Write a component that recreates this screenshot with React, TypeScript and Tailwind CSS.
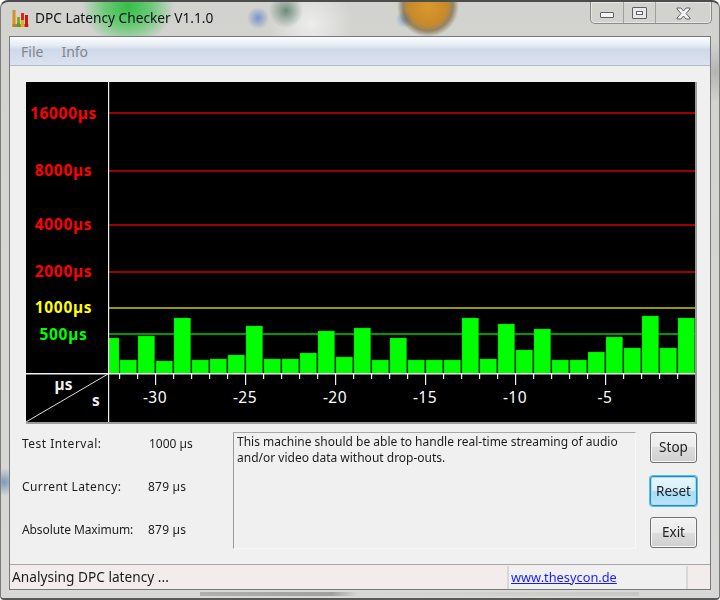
import React from "react";

const tops = [338, 360, 336, 361, 318, 360, 359, 355, 326, 359, 359, 353, 331, 357, 328, 360, 338, 360, 360, 360, 318, 359, 324, 350, 329, 360, 360, 352, 337, 348, 316, 348, 318];
const scale = [
  { t: "16000µs", y: 118.5, c: "#ff0000" },
  { t: "8000µs", y: 176, c: "#ff0000" },
  { t: "4000µs", y: 230, c: "#ff0000" },
  { t: "2000µs", y: 277, c: "#ff0000" },
  { t: "1000µs", y: 313, c: "#ffff00" },
  { t: "500µs", y: 340, c: "#00ff00" },
];
const lines = [
  { y: 113, c: "#e00000" },
  { y: 171, c: "#e00000" },
  { y: 225, c: "#e00000" },
  { y: 272, c: "#e00000" },
  { y: 308, c: "#d8d800" },
  { y: 334, c: "#00d800" },
];
const seconds = [
  { x: 155, t: "-30" },
  { x: 245, t: "-25" },
  { x: 335, t: "-20" },
  { x: 425, t: "-15" },
  { x: 515, t: "-10" },
  { x: 605, t: "-5" },
];

function Chart() {
  const ticks = Array.from({ length: 32 }, (_, i) => 119 + i * 18);
  return (
    <svg width={669} height={340} viewBox="26 82 669 340" className="block" fontFamily="'Noto Sans', sans-serif">
      <rect x={26} y={82} width={669} height={340} fill="#000" />
      {lines.map((l) => (
        <rect key={l.y} x={109} y={l.y - 0.7} width={586} height={1.4} fill={l.c} />
      ))}
      {tops.map((top, i) => {
        const x = i === 0 ? 109 : 120 + (i - 1) * 18;
        const w = i === 0 ? 10 : 16.6;
        return <rect key={i} x={x} y={top} width={w} height={373.5 - top} fill="#00ff00" stroke="#00b000" strokeWidth={0.4} />;
      })}
      <rect x={26} y={373} width={669} height={1.5} fill="#f0f0f0" />
      <rect x={108} y={82} width={1.2} height={340} fill="#f0f0f0" />
      {ticks.map((x) => (
        <rect key={x} x={x} y={374} width={1.2} height={(x - 155) % 90 === 0 ? 11 : 5} fill="#f0f0f0" />
      ))}
      <line x1={26} y1={422} x2={108} y2={374} stroke="#e0e0e0" strokeWidth={1} />
      {scale.map((s) => (
        <text key={s.t} x={63.5} y={s.y} textAnchor="middle" fill={s.c} fontSize={15.5} fontWeight={700} letterSpacing={0.7}>
          {s.t}
        </text>
      ))}
      <text x={63.5} y={390} textAnchor="middle" fill="#eeeeee" fontSize={15.5} fontWeight={700}>µs</text>
      <text x={96} y={406} textAnchor="middle" fill="#eeeeee" fontSize={15.5} fontWeight={700}>s</text>
      {seconds.map((s) => (
        <text key={s.t} x={s.x} y={403} textAnchor="middle" fill="#ffffff" fontSize={15.5} letterSpacing={0.5}>
          {s.t}
        </text>
      ))}
    </svg>
  );
}

function AppIcon() {
  return (
    <svg width={18} height={18} viewBox="0 0 18 18" className="block">
      <rect x={0.5} y={0} width={3} height={17} fill="#d89020" />
      <rect x={0.5} y={14} width={16} height={3} fill="#c08020" />
      <rect x={5} y={7} width={3} height={10} fill="#80a820" />
      <rect x={5} y={13} width={3} height={4} fill="#50a030" />
      <rect x={9} y={3} width={3} height={14} fill="#d82818" />
      <rect x={9} y={10} width={3} height={7} fill="#d8b020" />
      <rect x={13} y={5} width={3} height={12} fill="#c81818" />
    </svg>
  );
}

function CaptionButtons() {
  return (
    <div className="flex h-[22px] w-[122px] self-start rounded-b-[5px] border border-t-0 border-[#8a8a8a] shadow-[inset_0_0_0_1px_rgba(255,255,255,0.45)]">
      <div className="flex w-[33px] items-end justify-center border-r border-[#a0a0a0] pb-[5px]">
        <div className="h-[6px] w-[14px] rounded-[1px] border border-[#5c6068] bg-[#f4f4f4]" />
      </div>
      <div className="flex w-[32px] items-start justify-center border-r border-[#a0a0a0] pt-[5px]">
        <div className="flex h-[12px] w-[15px] items-center justify-center rounded-[1px] border border-[#5c6068] bg-[#e8e8e8]">
          <div className="h-[4px] w-[7px] border border-[#5c6068] bg-white" />
        </div>
      </div>
      <div className="flex flex-1 items-start justify-center pt-[5px]">
        <svg width={15} height={13} viewBox="0 0 15 13">
          <path d="M1 1h4l2.5 3L10 1h4v1L10 6.500 14 11v1h-4L7.500 9 5 12H1v-1l4-4.500L1 2z" fill="#f4f4f4" stroke="#60646c" strokeWidth={1} strokeLinejoin="round" />
        </svg>
      </div>
    </div>
  );
}

function Stat({ label, value, labelClass, valueClass }: { label: string; value: string; labelClass: string; valueClass: string }) {
  return (
    <div className="flex h-[18px] items-center">
      <span className={"w-[126px] shrink-0 whitespace-nowrap " + labelClass}>{label}</span>
      <span className={"whitespace-nowrap " + valueClass}>{value}</span>
    </div>
  );
}

function Btn({ children, active, h }: { children: React.ReactNode; active?: boolean; h: string }) {
  return (
    <button
      className={
        active
          ? h + " flex w-[47px] items-center justify-center rounded-[3px] border border-[#3c7fb1] bg-[linear-gradient(#e6f6fd_0%,#d4f0fc_50%,#a9dbf6_50%,#b8e4f9_100%)] text-[13.5px] text-[#222] shadow-[0_0_0_1px_#4fc3f0,inset_0_0_0_1px_#9ee0fa]"
          : h + " flex w-[47px] items-center justify-center rounded-[3px] border border-[#707070] bg-[linear-gradient(#f2f2f2_0%,#ebebeb_50%,#dddddd_50%,#cfcfcf_100%)] text-[13.5px] text-[#222] shadow-[inset_0_0_0_1px_#f8f8f8]"
      }
    >
      {children}
    </button>
  );
}

export default function App() {
  return (
    <div
      className="flex h-[600px] w-[720px] flex-col overflow-hidden rounded-t-[8px] rounded-b-[4px] border-x border-b-2 border-t-2 border-x-[#7c7c7c] border-b-[#5a5a5a] border-t-[#4c4c4c] bg-[radial-gradient(ellipse_46px_40px_at_127px_4px,rgba(50,190,70,1)_0,rgba(80,200,95,0.8)_50%,rgba(150,215,150,0)_100%),radial-gradient(circle_at_427px_4px,#d89a30_0,#c88a28_19px,rgba(120,100,60,0.7)_25px,rgba(180,180,170,0)_31px),radial-gradient(circle_at_404px_17px,rgba(110,150,200,0.9)_0,rgba(150,170,200,0)_9px),radial-gradient(circle_at_257px_16px,rgba(110,140,200,0.9)_0,rgba(170,185,205,0)_11px),radial-gradient(circle_at_285px_9px,rgba(90,125,105,0.85)_0,rgba(170,190,175,0)_17px),radial-gradient(circle_at_310px_22px,rgba(238,238,238,0.95)_0,rgba(230,230,230,0)_42px),radial-gradient(circle_at_3px_480px,rgba(90,130,170,0.7)_0,rgba(120,150,180,0)_14px),radial-gradient(circle_at_715px_70px,rgba(150,150,150,0.5)_0,rgba(160,160,160,0)_30px),linear-gradient(#d2d2ce,#d8d8d6)]"
      style={{ fontFamily: "'Noto Sans', sans-serif", fontSize: 12, color: "#1c1c1c", filter: "blur(0.3px)" }}
    >
      <div className="flex h-[34px] shrink-0 items-start pl-[11px] pr-[7px]">
        <div className="mt-[8px]">
          <AppIcon />
        </div>
        <span className="ml-[5px] mt-[6px] whitespace-nowrap text-[13.7px] leading-[20px] text-[#10131a]">DPC Latency Checker V1.1.0</span>
        <div className="flex-1" />
        <CaptionButtons />
      </div>

      <div className="mx-[8px] flex h-[554px] shrink-0 flex-col border border-[#77797c] bg-[#f0f0f0]">
        <div className="flex h-[29px] shrink-0 items-center gap-[18px] border-b border-[#b4b8c0] bg-[linear-gradient(#fbfcfd_0%,#e6ebf3_30%,#cfd9e9_45%,#dbe2f1_100%)] pl-[11px] text-[#80858c]">
          <span className="text-[14px]">File</span>
          <span className="text-[14px]">Info</span>
        </div>

        <div className="ml-[16px] mt-[16px] w-[671px] border-b-2 border-r-2 border-[#9c9c9c]">
          <Chart />
        </div>

        <div className="mt-[8px] flex pl-[12px]">
          <div className="flex w-[211px] shrink-0 flex-col gap-[25px] pt-[3px]">
            <Stat label="Test Interval:" value="1000 µs" labelClass="tracking-[0.5px]" valueClass="ml-px" />
            <Stat label="Current Latency:" value="879 µs" labelClass="tracking-[0.4px]" valueClass="tracking-[0.2px]" />
            <Stat label="Absolute Maximum:" value="879 µs" labelClass="tracking-[-0.1px]" valueClass="tracking-[0.2px]" />
          </div>
          <div className="h-[117px] w-[403px] shrink-0 border border-b-[#f8f8f8] border-l-[#9a9a9a] border-r-[#f8f8f8] border-t-[#a8a8a8] px-[3px] py-px leading-[15.500px]">
            <p>
              This machine should be able to handle real-time streaming of audio
              <br />
              and/or video data without drop-outs.
            </p>
          </div>
          <div className="ml-[14px] flex flex-col">
            <Btn h="h-[31px]">Stop</Btn>
            <div className="mt-[13px]">
              <Btn active h="h-[30px]">Reset</Btn>
            </div>
            <div className="mt-[11px]">
              <Btn h="h-[31px]">Exit</Btn>
            </div>
          </div>
        </div>

        <div className="mt-auto flex h-[25px] items-center border-t border-[#a8a8a8] bg-[#f2ecec] pt-px">
          <span className="w-[497px] shrink-0 pl-[2px] text-[13.7px]">Analysing DPC latency ...</span>
          <span className="flex h-full w-[181px] items-center border-l-2 border-r-2 border-[#d8d8d8] bg-[#f0f0f0] pl-[2px] text-[12.8px]">
            <span className="text-[#1a1aff] underline">www.thesycon.de</span>
          </span>
        </div>
      </div>

      <div className="ml-[199px] mr-[80px] mt-[2px] h-[4px] bg-[linear-gradient(90deg,#b0b0ac_0%,#a0a09c_30%,#d8d8d6_36%,#c8c8c6_100%)]" />
    </div>
  );
}
